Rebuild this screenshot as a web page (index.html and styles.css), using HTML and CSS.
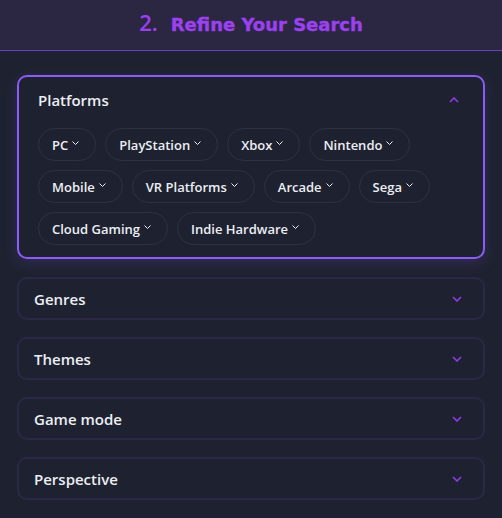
FILE: index.html
```html
<!DOCTYPE html>
<html lang="en">
<head>
  <meta charset="UTF-8">
  <title>Refine Your Search</title>
  <link rel="stylesheet" href="styles.css">
</head>
<body>

  <header class="step-header">
    <h2><span class="step-num">2.</span> Refine Your Search</h2>
  </header>

  <div class="filters">
    <div class="filter open">
      <div class="filter-head">
        <span>Platforms</span>
        <svg class="caret" width="10" height="6" viewBox="0 0 10 6"><path d="M1 5 L5 1 L9 5" fill="none" stroke="currentColor" stroke-width="1.6"/></svg>
      </div>
      <div class="chips">
        <div class="chip">PC <svg class="mini" width="7" height="4" viewBox="0 0 7 4"><path d="M0.5 0.5 L3.5 3.5 L6.5 0.5" fill="none" stroke="currentColor" stroke-width="1"/></svg></div>
        <div class="chip">PlayStation <svg class="mini" width="7" height="4" viewBox="0 0 7 4"><path d="M0.5 0.5 L3.5 3.5 L6.5 0.5" fill="none" stroke="currentColor" stroke-width="1"/></svg></div>
        <div class="chip">Xbox <svg class="mini" width="7" height="4" viewBox="0 0 7 4"><path d="M0.5 0.5 L3.5 3.5 L6.5 0.5" fill="none" stroke="currentColor" stroke-width="1"/></svg></div>
        <div class="chip">Nintendo <svg class="mini" width="7" height="4" viewBox="0 0 7 4"><path d="M0.5 0.5 L3.5 3.5 L6.5 0.5" fill="none" stroke="currentColor" stroke-width="1"/></svg></div>
        <div class="chip">Mobile <svg class="mini" width="7" height="4" viewBox="0 0 7 4"><path d="M0.5 0.5 L3.5 3.5 L6.5 0.5" fill="none" stroke="currentColor" stroke-width="1"/></svg></div>
        <div class="chip">VR Platforms <svg class="mini" width="7" height="4" viewBox="0 0 7 4"><path d="M0.5 0.5 L3.5 3.5 L6.5 0.5" fill="none" stroke="currentColor" stroke-width="1"/></svg></div>
        <div class="chip">Arcade <svg class="mini" width="7" height="4" viewBox="0 0 7 4"><path d="M0.5 0.5 L3.5 3.5 L6.5 0.5" fill="none" stroke="currentColor" stroke-width="1"/></svg></div>
        <div class="chip">Sega <svg class="mini" width="7" height="4" viewBox="0 0 7 4"><path d="M0.5 0.5 L3.5 3.5 L6.5 0.5" fill="none" stroke="currentColor" stroke-width="1"/></svg></div>
        <div class="chip">Cloud Gaming <svg class="mini" width="7" height="4" viewBox="0 0 7 4"><path d="M0.5 0.5 L3.5 3.5 L6.5 0.5" fill="none" stroke="currentColor" stroke-width="1"/></svg></div>
        <div class="chip">Indie Hardware <svg class="mini" width="7" height="4" viewBox="0 0 7 4"><path d="M0.5 0.5 L3.5 3.5 L6.5 0.5" fill="none" stroke="currentColor" stroke-width="1"/></svg></div>
      </div>
    </div>

    <div class="filter">
      <div class="filter-head">
        <span>Genres</span>
        <svg class="caret" width="10" height="6" viewBox="0 0 10 6"><path d="M1 1 L5 5 L9 1" fill="none" stroke="currentColor" stroke-width="1.6"/></svg>
      </div>
    </div>
    <div class="filter">
      <div class="filter-head">
        <span>Themes</span>
        <svg class="caret" width="10" height="6" viewBox="0 0 10 6"><path d="M1 1 L5 5 L9 1" fill="none" stroke="currentColor" stroke-width="1.6"/></svg>
      </div>
    </div>
    <div class="filter">
      <div class="filter-head">
        <span>Game mode</span>
        <svg class="caret" width="10" height="6" viewBox="0 0 10 6"><path d="M1 1 L5 5 L9 1" fill="none" stroke="currentColor" stroke-width="1.6"/></svg>
      </div>
    </div>
    <div class="filter">
      <div class="filter-head">
        <span>Perspective</span>
        <svg class="caret" width="10" height="6" viewBox="0 0 10 6"><path d="M1 1 L5 5 L9 1" fill="none" stroke="currentColor" stroke-width="1.6"/></svg>
      </div>
    </div>
  </div>

</body>
</html>
```

FILE: styles.css
```css
body {
  margin: 0;
  background: #1e2230;
  font-family: 'Open Sans', 'Noto Sans', sans-serif;
  color: #eceef3;
}

.step-header {
  height: 50px;
  background: #2b2642;
  border-bottom: 1px solid #6a3cc0;
  display: flex;
  align-items: center;
  justify-content: center;
}

.step-header h2 {
  margin: 0 0 4px;
  font-family: 'DejaVu Sans', sans-serif;
  font-size: 18px;
  font-weight: bold;
  line-height: 20px;
  color: #9b41ee;
  display: flex;
  align-items: baseline;
  gap: 13px;
  -webkit-text-stroke: 0.4px #9b41ee;
}

.step-num {
  font-family: 'Open Sans', sans-serif;
  font-size: 22px;
  font-weight: 600;
  line-height: 20px;
  -webkit-text-stroke: 0;
}

.filters {
  padding: 24px 17px;
  display: flex;
  flex-direction: column;
  gap: 17px;
}

.filter {
  border: 2px solid #2b2747;
  border-radius: 10px;
  padding: 0 15px;
}

.filter-head {
  height: 39px;
  display: flex;
  align-items: center;
  justify-content: space-between;
  font-size: 15px;
  font-weight: 600;
}

.filter-head .caret {
  color: #8f3be6;
  margin-right: 6px;
}

.filter.open {
  border-color: #8b5cf6;
  padding: 9px 20px 12px 19px;
  box-shadow: 0 4px 14px rgba(110, 70, 200, 0.25);
  margin-bottom: 1px;
}

.filter.open .filter-head {
  height: 28px;
  margin-bottom: 14px;
}

.filter.open .filter-head .caret {
  margin-right: 4px;
}

.chips {
  display: flex;
  flex-wrap: wrap;
  gap: 9px;
}

.chip {
  height: 31px;
  border: 1px solid #2d3242;
  border-radius: 17px;
  padding: 0 16px 0 13px;
  display: flex;
  align-items: center;
  font-size: 13px;
  font-weight: 600;
  color: #eceef3;
}

.mini {
  margin-left: 4px;
  margin-bottom: 3px;
}
```
